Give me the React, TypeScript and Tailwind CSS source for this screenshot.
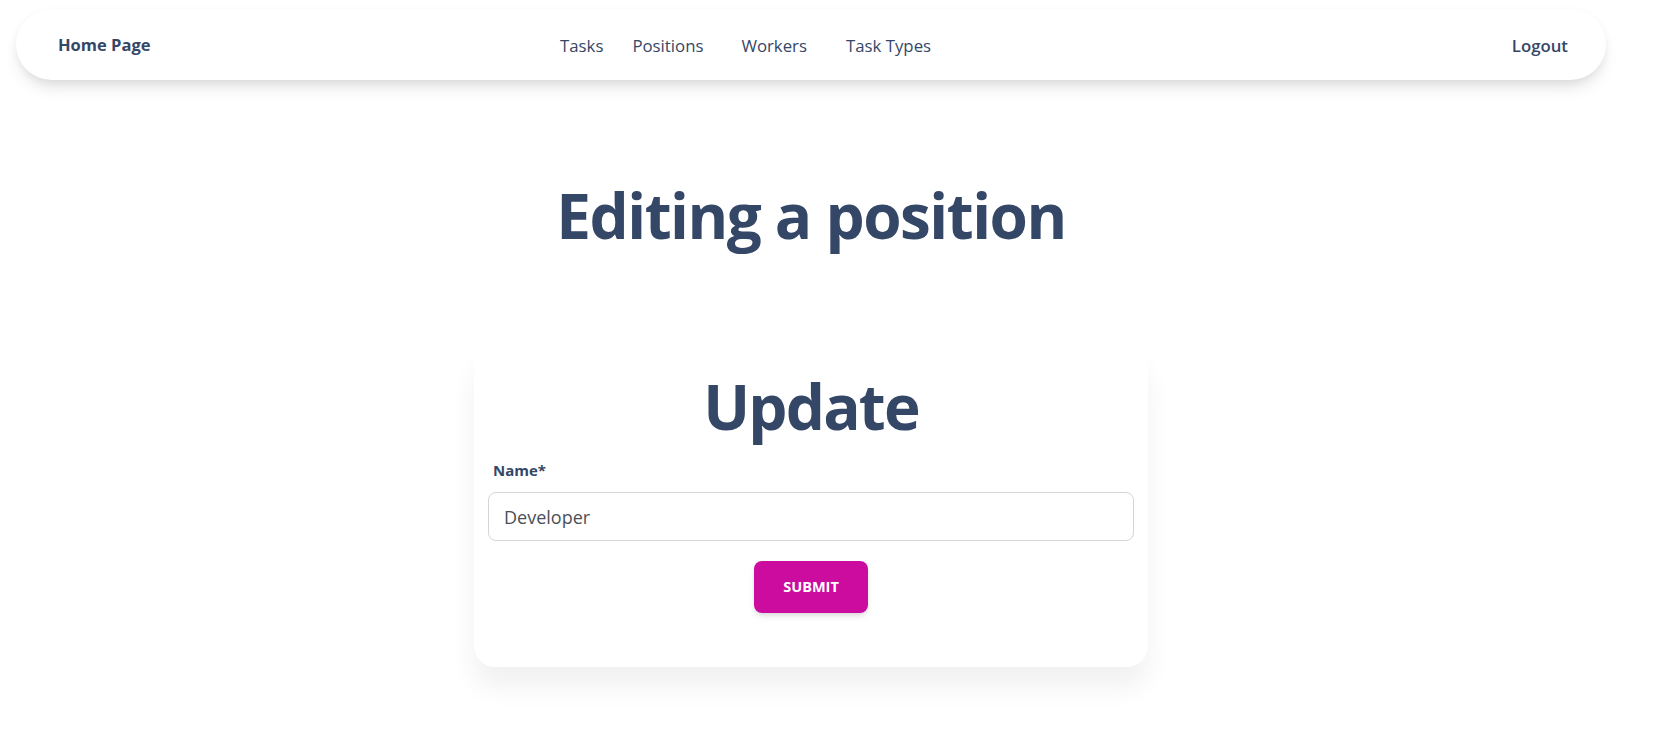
import React from "react";

export default function App() {
  return (
    <div className="min-h-[737px] w-full bg-white font-['Open_Sans',sans-serif] text-[#344767]">
      <div className="w-[1622px]">
        <nav className="mx-4 mt-[9px] flex h-[71px] items-center rounded-full bg-white pl-[42px] pr-[38px] pt-[2px] shadow-[0_10px_18px_-6px_rgba(0,0,0,0.16),0_2px_8px_rgba(0,0,0,0.04)]">
          <a className="w-[502px] text-[16.5px] font-bold">Home Page</a>
          <div className="flex items-center text-[16.8px] font-normal">
            <a>Tasks</a>
            <a className="ml-[29px]">Positions</a>
            <a className="ml-[38px]">Workers</a>
            <a className="ml-[39px]">Task Types</a>
          </div>
          <a className="ml-auto text-[16.8px] font-semibold">Logout</a>
        </nav>

        <h1 className="mt-[98px] text-center text-[62px] font-bold leading-[1.2] tracking-[-1.5px]">
          Editing a position
        </h1>

        <div className="mx-auto mt-[95px] w-[674px] rounded-[21px] bg-white px-[14px] pb-[54px] pt-[22px] shadow-[0_20px_27px_0_rgba(0,0,0,0.06)]">
          <h2 className="text-center text-[62px] font-bold leading-[1.2] tracking-[-1.8px]">Update</h2>
          <label className="ml-[5px] mt-[16px] block text-[15px] font-bold leading-[20px]">
            Name*
          </label>
          <input
            className="mt-[12px] block h-[49px] w-full rounded-[8px] border border-[#d2d6da] bg-white px-[15px] pt-[1px] text-[18px] text-[#495057] outline-none"
            defaultValue="Developer"
          />
          <div className="mt-[20px] flex justify-center">
            <button className="h-[52px] w-[114px] rounded-[8px] bg-[#cb0c9f] text-[14.5px] font-bold uppercase text-white shadow-[0_4px_7px_-1px_rgba(0,0,0,0.11),0_2px_4px_-1px_rgba(0,0,0,0.07)]">
              Submit
            </button>
          </div>
        </div>
      </div>
    </div>
  );
}
